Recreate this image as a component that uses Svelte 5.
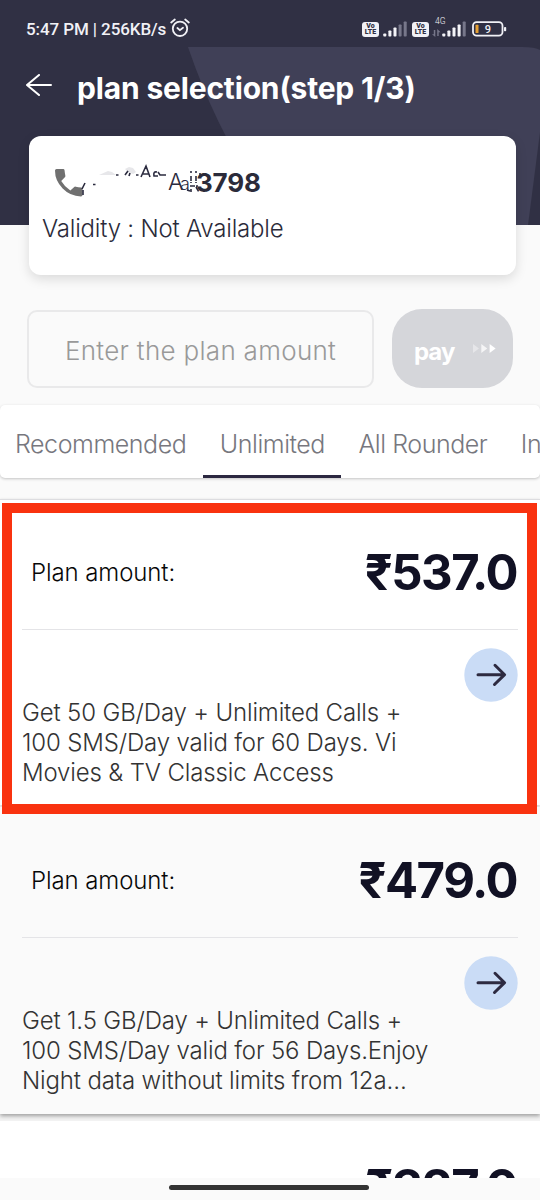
<script lang="ts">
  type Plan = { amount: string; lines: string[] };

  const tabs = ["Recommended", "Unlimited", "All Rounder", "International"];
  let active = $state("Unlimited");
  let amount = $state("");

  const plans: Plan[] = [
    { amount: "₹537.0", lines: ["Get 50 GB/Day + Unlimited Calls +", "100 SMS/Day valid for 60 Days. Vi", "Movies & TV Classic Access"] },
    { amount: "₹479.0", lines: ["Get 1.5 GB/Day + Unlimited Calls +", "100 SMS/Day valid for 56 Days.Enjoy", "Night data without limits from 12a…"] },
    { amount: "₹327.0", lines: [] },
  ];
</script>

{#snippet volte()}
  <span class="volte"><b>Vo</b><b>LTE</b></span>
{/snippet}

{#snippet signal(strong: number)}
  <svg class="signal" width="24" height="16" viewBox="0 0 24 16">
    {#each [3, 6, 9, 12, 15] as h, i}
      <rect x={i * 5.1 + 0.3} y={15.5 - h} width="3" height={h} rx="0.8" fill={i < strong ? "#f4f4f8" : "#77778a"} />
    {/each}
  </svg>
{/snippet}

<div class="screen">
  <header>
    <svg class="deco" width="540" height="225" viewBox="0 0 540 225">
      <path d="M188 47H522Q535 47 540 50V132L528 225H285Q225 155 188 47Z" fill="#404057" />
    </svg>
    <div class="status">
      <span class="clock">5:47 PM | 256KB/s</span>
      <svg class="alarm" width="20" height="20" viewBox="0 0 20 20" fill="none" stroke="#f1f1f6" stroke-width="1.8" stroke-linecap="round">
        <circle cx="10" cy="10.8" r="7.2" />
        <path d="M7.4 10l2.5 2.2L13 9.8M1.2 4.5L4.8 1.5M18.8 4.5L15.2 1.5" />
      </svg>
      <div class="radios">
        {@render volte()}
        {@render signal(3)}
        {@render volte()}
        <span class="data">
          <span>4G</span>
          <svg width="9" height="8" viewBox="0 0 9 8" fill="#77778a"><path d="M0 5.2h1.8V1h1.5v7zM5.2 0l3.4 3.2H6.7V7H5.2z" /></svg>
        </span>
        {@render signal(4)}
        <svg class="battery" width="35" height="16" viewBox="0 0 35 16">
          <rect x="1" y="1.2" width="29.5" height="13.4" rx="3.6" fill="none" stroke="#f1f1f6" stroke-width="1.8" />
          <rect x="3.5" y="3.8" width="3" height="8.2" rx="0.6" fill="#e6a033" />
          <rect x="32" y="6" width="2.2" height="4.2" rx="0.8" fill="#f1f1f6" />
          <text x="16" y="11.9" font-size="11" font-weight="500" text-anchor="middle" fill="#f1f1f6">9</text>
        </svg>
      </div>
    </div>
    <div class="title-row">
      <svg width="26" height="22" viewBox="0 0 26 22" fill="none" stroke="#fff" stroke-width="2" stroke-linecap="round" stroke-linejoin="round">
        <path d="M25 11H1M13 1L1 11l12 10" />
      </svg>
      <h1>plan selection(step 1/3)</h1>
    </div>
  </header>

  <section class="account">
    <div class="number">
      <svg class="phone" width="28" height="28" viewBox="0 0 27 27" fill="#707070">
        <path d="M1.5 0H8Q9 0 9.2 1.2Q9.5 4.3 10 6.5Q10.2 7.3 9.5 8L6 11.6Q9.3 17.2 14.8 20.8L18.3 17.5Q19 16.8 20 17Q22.5 17.7 25.3 17.8Q26.5 18 26.5 19V25Q26.5 26.4 25 26.4Q14.5 26 7.4 18.7Q0 11.5 0 1.5Q0 0 1.5 0Z" />
      </svg>
      <!-- scribbled-out leading digits -->
      <svg class="scribble" width="122" height="34" viewBox="0 0 122 34" fill="none" stroke="#2b2b3f" stroke-width="1.6">
        <path d="M16 9l9-4 4 1 4 3zM42 3l4-2 4 1 3 4-3 2-5-2z" fill="#e7e7ea" stroke="none" />
        <path d="M2 17L-1 23M0 24v5M10 18.500h2.500M33 9h2.500M42 9l3-4M46 10l1-3M53 9h2.500M58 11L63 0 67 11M60 8h6M74 6q-4-1-3 4h4M75 6l2 3h6" />
        <text x="85" y="24" font-size="23" fill="#2b2b3f" stroke="none">A</text>
        <text x="97" y="24" font-size="18" fill="#2b2b3f" stroke="none">a</text>
        <path d="M108 5v2M113 5v2M108 10v7M113 10v7M107 20h8M108 23v3M113 21l3 5M104 24l3 1M117 7v5" stroke-dasharray="5 1" />
      </svg>
      <strong>3798</strong>
    </div>
    <p>Validity : Not Available</p>
  </section>

  <div class="pay-row">
    <input bind:value={amount} placeholder="Enter the plan amount" />
    <button class="pay">
      <span>pay</span>
      <svg width="23" height="9" viewBox="0 0 23 9" fill="#fff">
        <path d="M0 0l6 4.5L0 9z" opacity=".4" />
        <path d="M8.3 0l6 4.5-6 4.5z" opacity=".75" />
        <path d="M16.6 0l6 4.5-6 4.5z" />
      </svg>
    </button>
  </div>

  <nav>
    {#each tabs as tab}
      <button class:active={tab === active} onclick={() => (active = tab)}>{tab}</button>
    {/each}
  </nav>

  <main>
    {#each plans as plan, i}
      <article class:alt={i === 1} class:last={i === 2}>
        <div class="amount">
          <span>Plan amount:</span>
          <strong>{plan.amount}</strong>
        </div>
        {#if plan.lines.length}
          <div class="go">
            <svg width="54" height="54" viewBox="0 0 54 54" fill="none" stroke="#2d2a40" stroke-width="3" stroke-linecap="round" stroke-linejoin="round">
              <circle cx="27" cy="27" r="26.7" fill="#cadcf6" stroke="none" />
              <path d="M14 26.7H40M31 17.3l9.600 9.400L30.500 36.500" />
            </svg>
          </div>
          <div class="details">
            {#each plan.lines as line}
              <div>{line}</div>
            {/each}
          </div>
        {/if}
        {#if i === 0}
          <div class="highlight"></div>
        {/if}
      </article>
    {/each}
  </main>

  <footer><i></i></footer>
</div>

<style>
  :global(body) { margin: 0; }
  .screen { width: 540px; height: 1200px; overflow: hidden; display: flex; flex-direction: column; background: #fafafa; font-family: Inter, "Liberation Sans", sans-serif; font-weight: 350; color: #2b2b3a; }
  button, input { font: inherit; color: inherit; border: 0; padding: 0; background: none; }

  header { position: relative; height: 225px; flex: none; background: #303044; color: #fff; }
  .deco { position: absolute; inset: 0; }
  .status { position: relative; height: 56px; display: flex; align-items: center; box-sizing: border-box; padding: 2px 33px 0 26px; font-family: Roboto, sans-serif; color: #f1f1f6; }
  .clock { font-size: 17px; font-weight: 500; letter-spacing: -.1px; white-space: nowrap; width: 144px; }
  .alarm { margin-top: -2px; }
  .radios { margin-left: auto; display: flex; align-items: center; }
  .volte { width: 17px; height: 15px; border-radius: 3px; background: #f1f1f6; color: #303044; display: flex; flex-direction: column; justify-content: center; align-items: center; font-size: 7px; line-height: 6.5px; }
  .volte b { font-weight: 900; }
  .signal { margin: 0 5px 0 4px; }
  .data { width: 9px; height: 20px; margin: -4px 0 0 3px; display: flex; flex-direction: column; justify-content: space-between; font-size: 8.5px; line-height: 9px; }
  .data span { margin-left: 3px; }
  .data + .signal { margin: 0 6px 0 1px; }
  .title-row { position: relative; display: flex; align-items: center; padding: 9px 0 0 26px; height: 44px; }
  h1 { margin: 2px 0 0 25px; font-size: 30px; font-weight: 700; letter-spacing: -.17px; white-space: nowrap; }
  .title-row svg { margin-top: -4px; }

  .account { position: relative; flex: none; box-sizing: border-box; width: 487px; height: 139px; margin: -89px 0 0 29px; padding: 30px 13px; background: #fff; border-radius: 12px; box-shadow: 0 4px 12px rgba(0, 0, 0, .13); }
  .number { display: flex; height: 34px; padding-left: 13px; }
  .phone { margin-top: 3px; }
  .scribble { overflow: visible; }
  .number strong { margin-left: -9px; font-size: 26px; font-weight: 700; line-height: 33px; letter-spacing: -.2px; }
  .account p { margin: 12px 0 0; font-size: 24px; line-height: 34px; letter-spacing: -.2px; white-space: nowrap; }

  .pay-row { display: flex; flex: none; margin: 34px 27px 0; height: 79px; }
  input { box-sizing: border-box; width: 347px; height: 78px; margin-top: 1px; padding: 2px 0 0 36px; border: 2px solid #e9e9ea; border-radius: 10px; font-size: 26px; letter-spacing: .3px; outline: none; }
  input::placeholder { color: #999; opacity: 1; }
  .pay { width: 121px; margin-left: 18px; border-radius: 30px; background: #d5d6da; color: #fff; display: flex; align-items: center; padding: 5px 0 0 22px; box-sizing: border-box; font-size: 24px; font-weight: 700; letter-spacing: -1px; }
  .pay svg { margin: -6px 0 0 19px; }

  nav { position: relative; z-index: 1; flex: none; display: flex; height: 73px; margin-top: 17px; background: #fff; border-radius: 5px; box-shadow: 0 1px 3px rgba(0, 0, 0, .22); overflow: hidden; }
  nav button { flex: none; padding: 8px 16.500px 0 17px; font-size: 25px; letter-spacing: -.45px; color: #77777e; box-sizing: border-box; border-bottom: 3px solid transparent; }
  nav button:first-child { padding-left: 15px; }
  nav .active { border-bottom-color: #2b2840; }

  main { flex: 1; min-height: 0; overflow: hidden; padding-top: 21px; }
  article { position: relative; height: 306px; box-sizing: border-box; border-top: 1px solid #dddde0; background: #fff; box-shadow: 0 1px 3px rgba(0, 0, 0, .2); padding: 0 22px; margin-bottom: 2px; }
  article.alt { background: #fafafa; height: 307px; border-top-color: #fafafa; margin-bottom: 7px; box-shadow: 0 2px 4px rgba(0, 0, 0, .35), 0 7px 0 #f3f3f3; }
  article.last { border-top: 0; box-shadow: none; }
  .amount { height: 130px; display: flex; align-items: center; justify-content: space-between; border-bottom: 1.5px solid #e4e4e7; padding: 15px 0 0 9px; box-sizing: border-box; }
  .last .amount { height: 118px; }
  .amount span { font-size: 24px; letter-spacing: -.1px; color: #080808; }
  .amount strong { margin-right: 1px; font-size: 49px; font-weight: 700; letter-spacing: -1.5px; color: #111124; }
  .go { height: 54px; margin-top: 18px; display: flex; justify-content: flex-end; }
  .details { margin-top: -4px; font-size: 24px; line-height: 30px; letter-spacing: -.15px; color: #333; white-space: nowrap; }
  .highlight { position: absolute; left: 2px; top: 3px; width: 535px; height: 311px; box-sizing: border-box; border: 10px solid #f9320f; z-index: 2; }

  footer { position: relative; z-index: 3; flex: none; height: 22px; background: #fafafa; display: flex; justify-content: center; }
  footer i { width: 200px; height: 5px; margin: 7px 3px 0 0; border-radius: 3px; background: #333; }
</style>
